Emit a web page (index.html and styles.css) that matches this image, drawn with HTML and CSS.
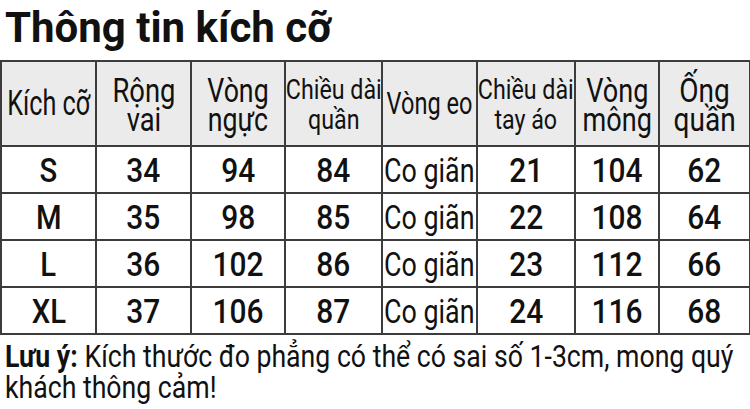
FILE: index.html
```html
<!DOCTYPE html>
<html lang="vi">
<head>
<meta charset="utf-8">
<title>Thông tin kích cỡ</title>
<link rel="stylesheet" href="styles.css">
</head>
<body>
<div class="page">
  <h1 class="title"><span class="sq title-text">Thông tin kích cỡ</span></h1>
  <table class="size-table">
    <colgroup>
      <col class="c1"><col class="c2"><col class="c3"><col class="c4"><col class="c5"><col class="c6"><col class="c7"><col class="c8">
    </colgroup>
    <thead>
      <tr>
        <th><div class="cell"><span class="sq h-kc">Kích cỡ</span></div></th>
        <th><div class="cell"><span class="sq h-big h-rv"><span class="ln">Rộng</span><span class="ln">vai</span></span></div></th>
        <th><div class="cell"><span class="sq h-big h-vn"><span class="ln">Vòng</span><span class="ln">ngực</span></span></div></th>
        <th><div class="cell"><span class="sq h-small"><span class="ln">Chiều dài</span><span class="ln">quần</span></span></div></th>
        <th><div class="cell"><span class="sq h-ve">Vòng eo</span></div></th>
        <th><div class="cell"><span class="sq h-small"><span class="ln">Chiều dài</span><span class="ln">tay áo</span></span></div></th>
        <th><div class="cell"><span class="sq h-big h-vm"><span class="ln">Vòng</span><span class="ln">mông</span></span></div></th>
        <th><div class="cell"><span class="sq h-big h-oq"><span class="ln">Ống</span><span class="ln">quần</span></span></div></th>
      </tr>
    </thead>
    <tbody>
      <tr>
        <td><div class="cell"><span class="sq num sz">S</span></div></td>
        <td><div class="cell"><span class="sq num">34</span></div></td>
        <td><div class="cell"><span class="sq num">94</span></div></td>
        <td><div class="cell"><span class="sq num">84</span></div></td>
        <td><div class="cell left"><span class="sq cg">Co giãn</span></div></td>
        <td><div class="cell"><span class="sq num">21</span></div></td>
        <td><div class="cell"><span class="sq num">104</span></div></td>
        <td><div class="cell"><span class="sq num">62</span></div></td>
      </tr>
      <tr>
        <td><div class="cell"><span class="sq num sz">M</span></div></td>
        <td><div class="cell"><span class="sq num">35</span></div></td>
        <td><div class="cell"><span class="sq num">98</span></div></td>
        <td><div class="cell"><span class="sq num">85</span></div></td>
        <td><div class="cell left"><span class="sq cg">Co giãn</span></div></td>
        <td><div class="cell"><span class="sq num">22</span></div></td>
        <td><div class="cell"><span class="sq num">108</span></div></td>
        <td><div class="cell"><span class="sq num">64</span></div></td>
      </tr>
      <tr>
        <td><div class="cell"><span class="sq num sz">L</span></div></td>
        <td><div class="cell"><span class="sq num">36</span></div></td>
        <td><div class="cell"><span class="sq num">102</span></div></td>
        <td><div class="cell"><span class="sq num">86</span></div></td>
        <td><div class="cell left"><span class="sq cg">Co giãn</span></div></td>
        <td><div class="cell"><span class="sq num">23</span></div></td>
        <td><div class="cell"><span class="sq num">112</span></div></td>
        <td><div class="cell"><span class="sq num">66</span></div></td>
      </tr>
      <tr>
        <td><div class="cell"><span class="sq num sz">XL</span></div></td>
        <td><div class="cell"><span class="sq num">37</span></div></td>
        <td><div class="cell"><span class="sq num">106</span></div></td>
        <td><div class="cell"><span class="sq num">87</span></div></td>
        <td><div class="cell left"><span class="sq cg">Co giãn</span></div></td>
        <td><div class="cell"><span class="sq num">24</span></div></td>
        <td><div class="cell"><span class="sq num">116</span></div></td>
        <td><div class="cell"><span class="sq num">68</span></div></td>
      </tr>
    </tbody>
  </table>
  <div class="note">
    <span class="sq note-line"><b>Lưu ý:</b> Kích thước đo phẳng có thể có sai số 1-3cm, mong quý</span>
    <span class="sq note-line">khách thông cảm!</span>
  </div>
</div>
</body>
</html>
```

FILE: styles.css
```css
html, body {
  margin: 0;
  padding: 0;
  background: #ffffff;
}
body {
  font-family: Roboto, "Noto Sans", "Liberation Sans", sans-serif;
  color: #111111;
  width: 750px;
  height: 409px;
  overflow: hidden;
}
.page {
  display: flex;
  flex-direction: column;
}
.sq {
  display: inline-block;
  white-space: nowrap;
}
.title {
  margin: 0;
  height: 60px;
  padding-left: 5px;
  font-size: 42px;
  font-weight: 700;
  line-height: 60px;
  display: flex;
  align-items: center;
}
.title-text {
  position: relative;
  top: -2px;
}
.size-table {
  border-collapse: collapse;
  table-layout: fixed;
  width: 749px;
}
.c1 { width: 95px; }
.c2 { width: 95px; }
.c3 { width: 94px; }
.c4 { width: 97px; }
.c5 { width: 95px; }
.c6 { width: 98px; }
.c7 { width: 84px; }
.c8 { width: 91px; }
.size-table th,
.size-table td {
  border: 2px solid #3c3c3c;
  padding: 0;
  font-weight: 400;
  overflow: visible;
}
.size-table th {
  background: #ebebeb;
  height: 83px;
}
.size-table td {
  background: #ffffff;
  height: 45px;
}
.cell {
  display: flex;
  justify-content: center;
  align-items: center;
  height: 100%;
}
.cell.left {
  justify-content: flex-start;
  padding-left: 1px;
}
.ln {
  display: block;
  text-align: center;
}
.h-kc {
  font-size: 35px;
  transform: scaleX(0.72);
}
.h-big {
  font-size: 33px;
  line-height: 29px;
  padding-top: 2px;
}
.h-small {
  font-size: 28px;
  line-height: 30px;
  padding-top: 2px;
  transform: scaleX(0.83);
}
.h-rv { transform: scaleX(0.83); }
.h-vn { transform: scaleX(0.81); }
.h-vm { transform: scaleX(0.82); }
.h-oq { transform: scaleX(0.85); }
.h-ve {
  font-size: 31px;
  transform: scaleX(0.76);
}
.num {
  font-size: 34px;
  font-weight: 500;
  line-height: 40px;
  transform: scaleX(0.88);
}
.num.sz { transform: scaleX(0.86); }
.cg {
  font-size: 34px;
  line-height: 40px;
  transform: scaleX(0.79);
  transform-origin: left center;
}
.note {
  display: flex;
  flex-direction: column;
  padding-left: 5px;
  padding-top: 6px;
  font-size: 31px;
  line-height: 31px;
}
.note-line {
  transform: scaleX(0.86);
  transform-origin: left center;
}
.note-line b {
  font-weight: 700;
}
```
